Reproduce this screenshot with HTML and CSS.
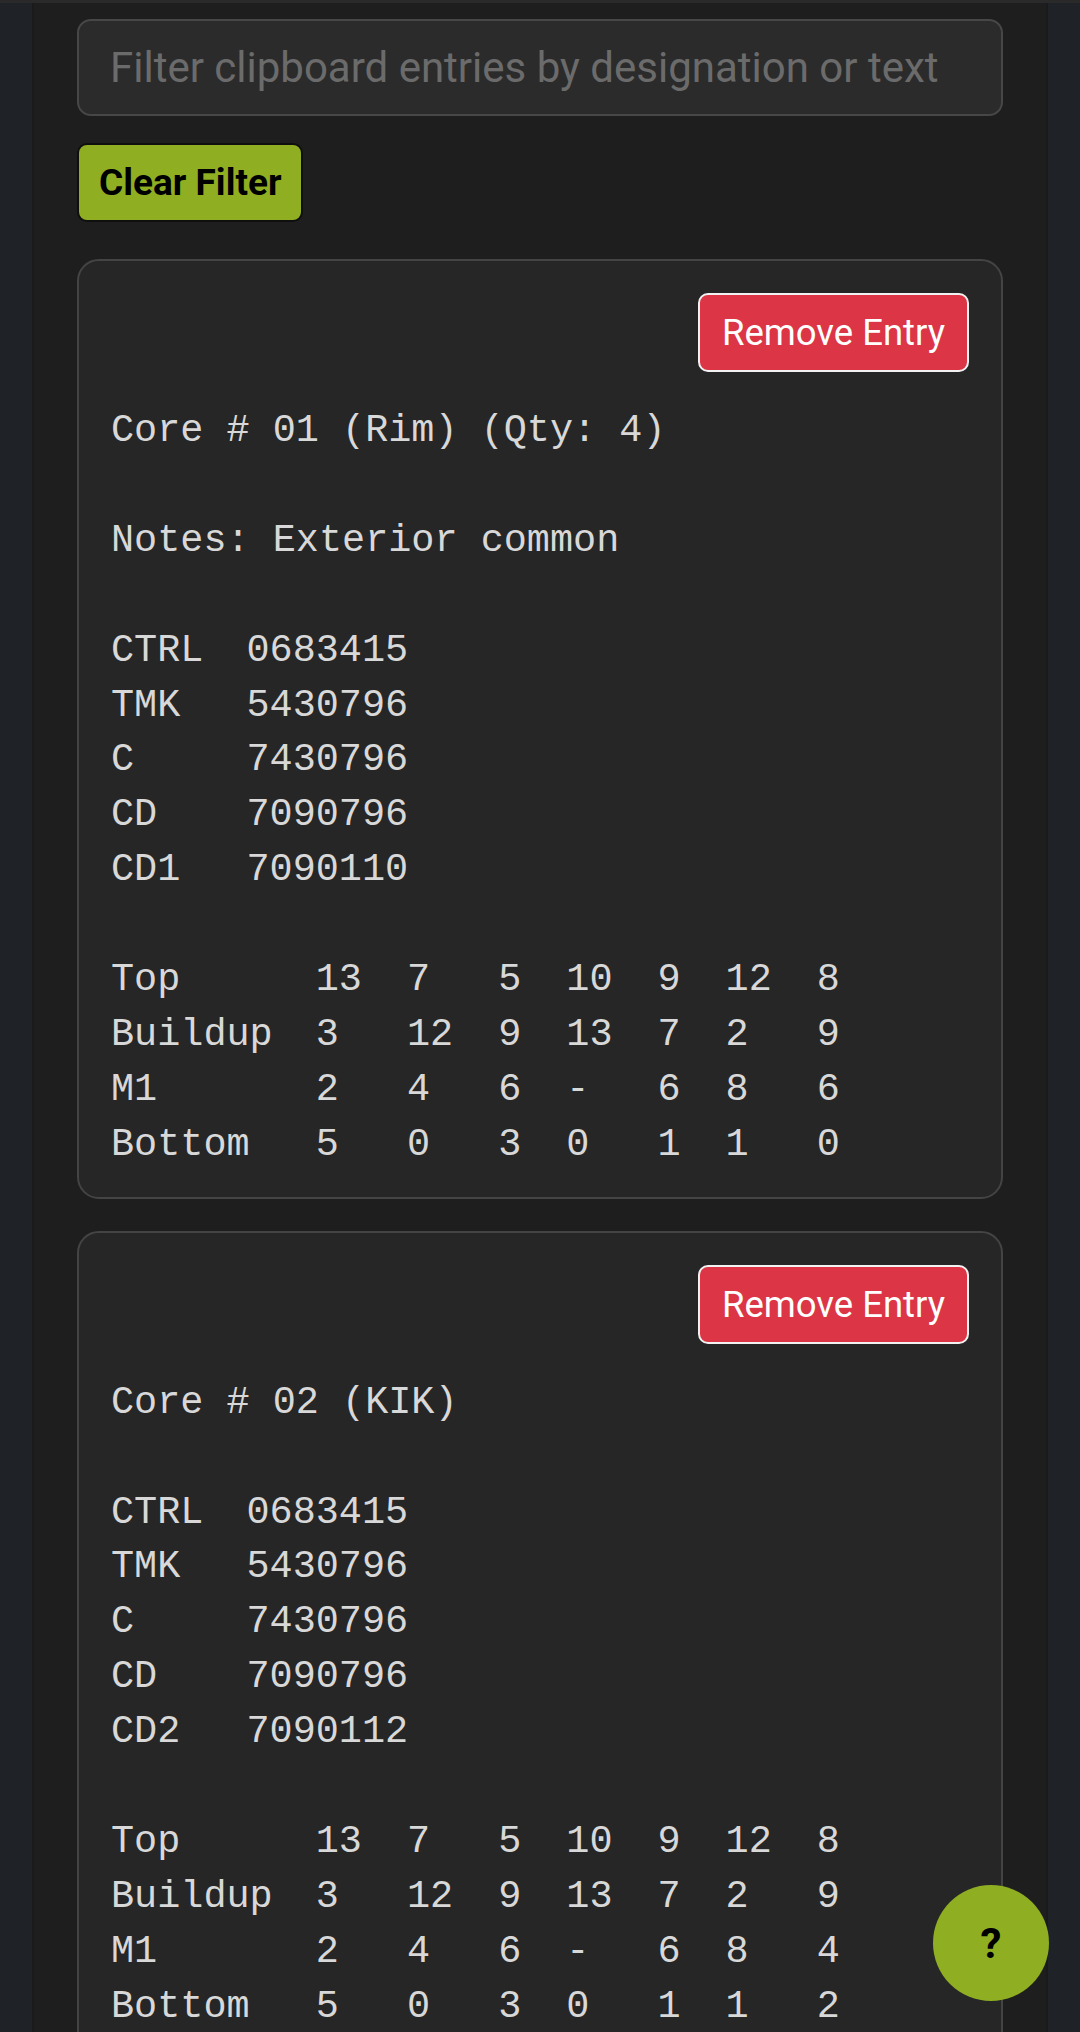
FILE: index.html
```html
<!DOCTYPE html>
<html lang="en">
<head>
    <meta charset="UTF-8">
    <meta name="viewport" content="width=device-width, initial-scale=1.0">
    <title>Clipboard</title>
    <link rel="stylesheet" href="styles.css">
</head>
<body>
    <div class="page">
        <input type="text" class="filter-input" placeholder="Filter clipboard entries by designation or text">
        <button class="clear-button">Clear Filter</button>

        <div class="entry">
            <div class="entry-actions">
                <button class="remove-button">Remove Entry</button>
            </div>
            <div class="entry-text">
                <div class="line">Core # 01 (Rim) (Qty: 4)</div>
                <div class="line">&nbsp;</div>
                <div class="line">Notes: Exterior common</div>
                <div class="line">&nbsp;</div>
                <table class="codes">
                    <tr><td>CTRL</td><td>0683415</td></tr>
                    <tr><td>TMK</td><td>5430796</td></tr>
                    <tr><td>C</td><td>7430796</td></tr>
                    <tr><td>CD</td><td>7090796</td></tr>
                    <tr><td>CD1</td><td>7090110</td></tr>
                </table>
                <div class="line">&nbsp;</div>
                <table class="layers">
                    <tr><td>Top</td><td>13</td><td>7</td><td>5</td><td>10</td><td>9</td><td>12</td><td>8</td></tr>
                    <tr><td>Buildup</td><td>3</td><td>12</td><td>9</td><td>13</td><td>7</td><td>2</td><td>9</td></tr>
                    <tr><td>M1</td><td>2</td><td>4</td><td>6</td><td>-</td><td>6</td><td>8</td><td>6</td></tr>
                    <tr><td>Bottom</td><td>5</td><td>0</td><td>3</td><td>0</td><td>1</td><td>1</td><td>0</td></tr>
                </table>
            </div>
        </div>

        <div class="entry">
            <div class="entry-actions">
                <button class="remove-button">Remove Entry</button>
            </div>
            <div class="entry-text">
                <div class="line">Core # 02 (KIK)</div>
                <div class="line">&nbsp;</div>
                <table class="codes">
                    <tr><td>CTRL</td><td>0683415</td></tr>
                    <tr><td>TMK</td><td>5430796</td></tr>
                    <tr><td>C</td><td>7430796</td></tr>
                    <tr><td>CD</td><td>7090796</td></tr>
                    <tr><td>CD2</td><td>7090112</td></tr>
                </table>
                <div class="line">&nbsp;</div>
                <table class="layers">
                    <tr><td>Top</td><td>13</td><td>7</td><td>5</td><td>10</td><td>9</td><td>12</td><td>8</td></tr>
                    <tr><td>Buildup</td><td>3</td><td>12</td><td>9</td><td>13</td><td>7</td><td>2</td><td>9</td></tr>
                    <tr><td>M1</td><td>2</td><td>4</td><td>6</td><td>-</td><td>6</td><td>8</td><td>4</td></tr>
                    <tr><td>Bottom</td><td>5</td><td>0</td><td>3</td><td>0</td><td>1</td><td>1</td><td>2</td></tr>
                </table>
            </div>
        </div>
    </div>

    <button class="help-button">?</button>
</body>
</html>
```

FILE: styles.css
```css
body {
    margin: 0;
    background: #1f2328;
    border-top: 3px solid #2a2a2a;
    font-family: 'Roboto', 'Noto Sans', sans-serif;
    color: #e6e6e6;
}

.page {
    margin: 0 32px;
    padding: 16px 43px 40px 43px;
    background: #1e1e1e;
    border-left: 2px solid #1a1a1a;
    border-right: 2px solid #1a1a1a;
    min-height: 2100px;
}

.filter-input {
    display: block;
    box-sizing: border-box;
    width: 100%;
    height: 97px;
    padding: 0 31px;
    background: #2b2b2b;
    border: 2px solid #474747;
    border-radius: 14px;
    font-family: 'Roboto', sans-serif;
    font-size: 42px;
    color: #e6e6e6;
    outline: none;
}

.filter-input::placeholder {
    color: #6b6b6b;
}

.clear-button {
    display: block;
    box-sizing: border-box;
    height: 79px;
    margin-top: 27px;
    padding: 0 20px;
    background: #8fae22;
    border: 2px solid #0f0f0f;
    border-radius: 10px;
    font-family: 'Roboto', sans-serif;
    font-weight: bold;
    font-size: 37px;
    color: #000;
}

.entry {
    margin-top: 37px;
    padding: 32px 32px 24px 32px;
    background: #262626;
    border: 2px solid #444;
    border-radius: 22px;
}

.entry + .entry {
    margin-top: 32px;
}

.entry-actions {
    display: flex;
    justify-content: flex-end;
}

.remove-button {
    box-sizing: border-box;
    height: 79px;
    padding: 0 22px;
    background: #dc3545;
    border: 2px solid #f2f2f2;
    border-radius: 10px;
    font-family: 'Roboto', sans-serif;
    font-size: 36.5px;
    color: #fff;
}

.entry-text {
    margin-top: 32px;
    font-family: 'Courier New', Courier, 'Nimbus Mono PS', FreeMono, 'Liberation Mono', monospace;
    font-size: 38.5px;
    line-height: 54.9px;
    color: #d8d8d8;
}

.entry-text table {
    border-collapse: collapse;
    font: inherit;
    color: inherit;
}

.entry-text td {
    padding: 0 45px 0 0;
    height: 54.9px;
    white-space: pre;
}

.entry-text td:first-child {
    padding-right: 43px;
}

.help-button {
    position: fixed;
    right: 31px;
    bottom: 31px;
    width: 116px;
    height: 116px;
    border: none;
    border-radius: 50%;
    background: #8fae22;
    font-family: 'Roboto', sans-serif;
    font-weight: bold;
    font-size: 42px;
    color: #000;
}
```
